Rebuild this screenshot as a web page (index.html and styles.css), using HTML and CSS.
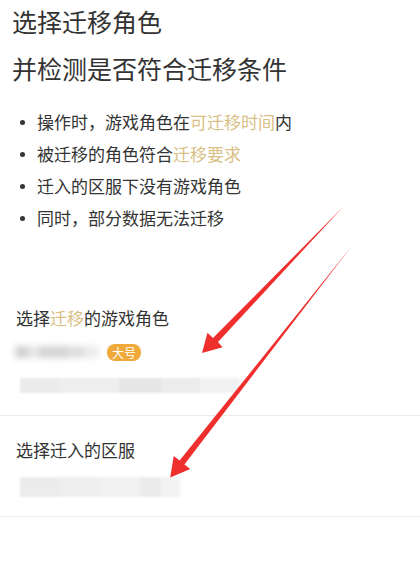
FILE: index.html
```html
<!DOCTYPE html>
<html lang="zh-CN">
<head>
  <meta charset="UTF-8" />
  <meta name="viewport" content="width=device-width, initial-scale=1.0"/>
  <title>选择迁移角色</title>
  <link rel="stylesheet" href="styles.css">
</head>
<body>

  <div class="page">
    <div class="intro">
      <h1 class="title">选择迁移角色</h1>
      <h1 class="title second">并检测是否符合迁移条件</h1>

      <ul class="rules">
        <li>操作时，游戏角色在<span class="gold">可迁移时间</span>内</li>
        <li>被迁移的角色符合<span class="gold">迁移要求</span></li>
        <li>迁入的区服下没有游戏角色</li>
        <li>同时，部分数据无法迁移</li>
      </ul>
    </div>

    <div class="section first">
      <div class="label">选择<span class="gold">迁移</span>的游戏角色</div>
      <div class="role">
        <span class="blur name"></span>
        <span class="badge">大号</span>
      </div>
      <div class="mosaic wide"></div>
    </div>

    <div class="section">
      <div class="label">选择迁入的区服</div>
      <div class="mosaic short"></div>
    </div>
  </div>

  <!-- annotation arrows drawn over the page -->
  <svg class="arrows" width="420" height="583" viewBox="0 0 420 583">
    <polygon points="344,206 218,342 222.5,347.3 202,353 207.5,332.7 213,338" />
    <polygon points="351,247 184.4,464.4 190.3,469 170.2,477.5 173.7,456 179.6,460.6" />
  </svg>

</body>
</html>
```

FILE: styles.css
```css
body {
  margin: 0;
  font-family: "Noto Sans CJK SC", "Noto Sans", sans-serif;
  background: #fff;
  color: #333;
}

.page {
  width: 420px;
}

.intro {
  padding-left: 12px;
}

.title {
  margin: 0;
  font-size: 25px;
  font-weight: 400;
  line-height: 42px;
  color: #333;
}

.title.second {
  margin-top: 5px;
}

.rules {
  list-style: none;
  margin: 17px 0 0;
  padding: 0 0 0 8px;
}

.rules li {
  display: flex;
  align-items: center;
  font-size: 17px;
  line-height: 32px;
}

.rules li::before {
  content: "";
  width: 5px;
  height: 5px;
  border-radius: 50%;
  background: #333;
  margin-right: 12px;
}

.gold {
  color: #d9bf84;
}

.section {
  padding: 22px 0 19px 16px;
  border-bottom: 1px solid #ebebeb;
}

.section.first {
  margin-top: 72px;
  padding-top: 0;
  padding-bottom: 22px;
}

.label {
  font-size: 17px;
  line-height: 24px;
}

.role {
  display: flex;
  align-items: center;
  gap: 8px;
  height: 24px;
  margin-top: 10px;
  margin-left: -1px;
}

.blur {
  display: block;
  filter: blur(3px);
}

.name {
  width: 84px;
  height: 12px;
  background: linear-gradient(to right, #d2d2d2 0 16%, #e6e6e6 16% 28%, #d4d4d4 28% 62%, #dedede 62% 82%, #ececec 82%);
}

.badge {
  background: #f0aa3c;
  color: #fff;
  font-size: 12px;
  line-height: 17px;
  padding: 0 5px;
  border-radius: 8px;
}

.mosaic {
  filter: blur(1px);
}

.mosaic.wide {
  width: 220px;
  height: 15px;
  margin: 14px 0 0 4px;
  background: linear-gradient(to right, #ebebeb 0 18%, #eeeeee 18% 45%, #e6e6e6 45% 64%, #ececec 64% 82%, #f2f2f2 82%);
}

.mosaic.short {
  width: 160px;
  height: 20px;
  margin: 15px 0 0 4px;
  background: linear-gradient(to right, #ececec 0 25%, #efefef 25% 50%, #f1f1f1 50% 75%, #ebebeb 75% 88%, #f3f3f3 88%);
}

.arrows {
  position: absolute;
  left: 0;
  top: 0;
  pointer-events: none;
}

.arrows polygon {
  fill: #ef2e2e;
}
```
